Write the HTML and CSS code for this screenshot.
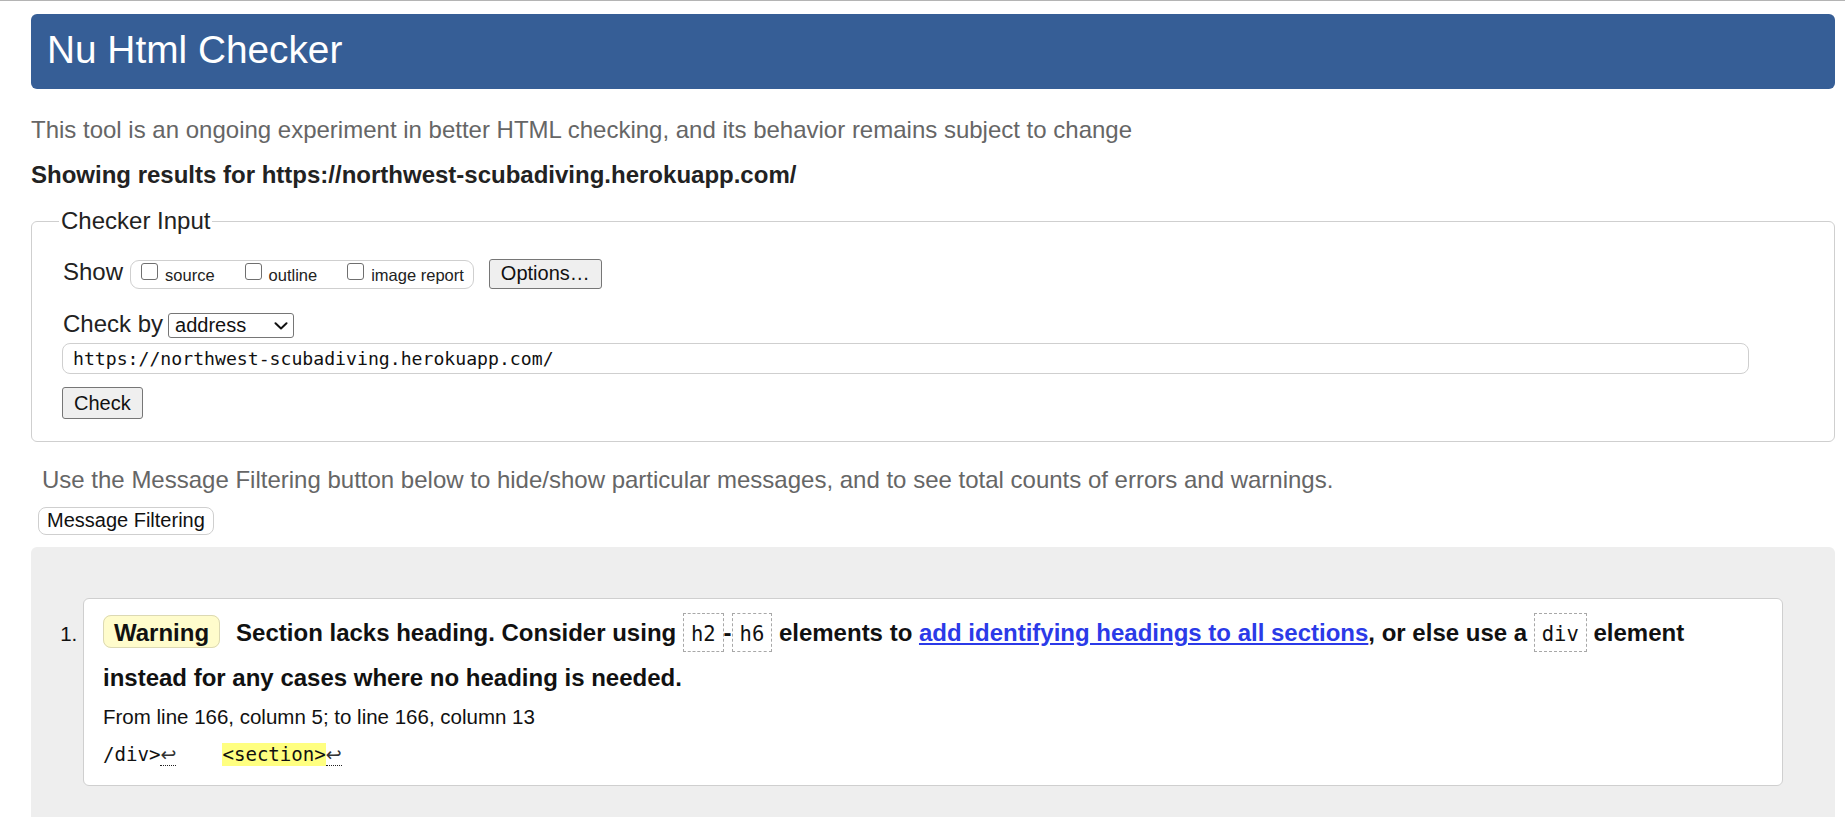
FILE: index.html
```
<!DOCTYPE html>
<html lang="en">
<head>
<meta charset="utf-8">
<title>Showing results for https://northwest-scubadiving.herokuapp.com/ - Nu Html Checker</title>
<link rel="stylesheet" href="styles.css">
</head>
<body>
<header class="banner"><h1 class="title">Nu Html Checker</h1></header>
<p class="intro">This tool is an ongoing experiment in better HTML checking, and its behavior remains subject to change</p>
<p class="showing">Showing results for https://northwest-scubadiving.herokuapp.com/</p>
<form class="checker">
  <fieldset class="fs">
    <legend class="legend">Checker Input</legend>
    <div class="row row-show">
      <span class="row-label">Show</span>
      <span class="opts">
        <label class="opt"><input type="checkbox" class="cb"><span class="opt-text">source</span></label>
        <label class="opt"><input type="checkbox" class="cb"><span class="opt-text">outline</span></label>
        <label class="opt"><input type="checkbox" class="cb"><span class="opt-text">image report</span></label>
      </span>
      <button type="button" class="btn btn-options">Options…</button>
    </div>
    <div class="row row-by">
      <label class="row-label">Check by</label>
      <span class="select-wrap">
        <select class="select"><option>address</option></select>
        <svg class="chev" width="14" height="8" viewBox="0 0 14 8"><path d="M1.5 1.2 L7 6.4 L12.5 1.2" fill="none" stroke="#111" stroke-width="2" stroke-linecap="round" stroke-linejoin="round"/></svg>
      </span>
    </div>
    <div class="row row-url"><input class="url" type="url" value="https://northwest-scubadiving.herokuapp.com/"></div>
    <div class="row row-check"><button type="button" class="btn btn-check">Check</button></div>
  </fieldset>
</form>
<p class="filter-note">Use the Message Filtering button below to hide/show particular messages, and to see total counts of errors and warnings.</p>
<button type="button" class="mf-btn">Message Filtering</button>
<section class="results">
  <ol class="messages">
    <li class="msg">
      <p class="msg-text"><strong class="badge">Warning</strong>Section lacks heading. Consider using <code class="tag">h2</code>-<code class="tag">h6</code> elements to <a class="msg-link" href="#">add identifying headings to all sections</a>, or else use a <code class="tag">div</code> element instead for any cases where no heading is needed.</p>
      <p class="location">From line 166, column 5; to line 166, column 13</p>
      <p class="extract"><code class="src">/div&gt;<span class="lf">↩</span>    <mark class="hl">&lt;section&gt;</mark><span class="lf">↩</span></code></p>
    </li>
  </ol>
</section>
</body>
</html>
```
FILE: styles.css
```
html {
  background: #fff;
}
body {
  margin: 0;
  border-top: 1px solid #b4b4b4;
  padding: 13px 10px 0 31px;
  font-family: "Liberation Sans", Arial, sans-serif;
  color: #111;
}

.banner {
  background: #365e96;
  border-radius: 6px;
  height: 75px;
}
.title {
  margin: 0;
  padding: 0 0 4px 16px;
  font-size: 38.8px;
  font-weight: normal;
  line-height: 71px;
  color: #fff;
}

.intro {
  margin: 27px 0 0;
  font-size: 24px;
  line-height: 28px;
  color: #666;
}
.showing {
  margin: 17px 0 0;
  font-size: 24px;
  line-height: 28px;
  font-weight: bold;
  color: #222;
}

.checker {
  margin: 18px 0 0;
}
.fs {
  margin: 0;
  border: 1px solid #cfcfcf;
  border-radius: 6px;
  padding: 24px 30px 22px 31px;
  min-width: 0;
}
.legend {
  margin-left: -4px;
  padding: 0 2px;
  font-size: 24px;
  line-height: 28px;
  color: #222;
}

.row {
  display: flex;
  align-items: flex-start;
}
.row-label {
  font-size: 24px;
  line-height: 28px;
  color: #222;
}
.row-show {
  height: 30px;
}
.row-show .row-label {
  margin-top: -1px;
}
.opts {
  display: flex;
  align-items: flex-start;
  box-sizing: border-box;
  height: 29px;
  margin: 1px 0 0 7px;
  padding: 0 9px 0 10px;
  border: 1px solid #cfcfcf;
  border-radius: 9px;
}
.opt {
  display: flex;
  align-items: flex-start;
  margin-right: 30px;
}
.opt:last-child {
  margin-right: 0;
}
.cb {
  appearance: none;
  -webkit-appearance: none;
  box-sizing: border-box;
  width: 17px;
  height: 17px;
  margin: 2px 7px 0 0;
  border: 1px solid #6f6f6f;
  border-radius: 3px;
  background: #fff;
}
.opt-text {
  margin-top: 5px;
  font-size: 16.5px;
  line-height: 18px;
  color: #222;
}

.btn {
  box-sizing: border-box;
  margin: 0;
  background: #efefef;
  border: 1px solid #767676;
  border-radius: 3px;
  font-family: "Liberation Sans", Arial, sans-serif;
  font-size: 20px;
  line-height: 23px;
  color: #111;
}
.btn-options {
  height: 30px;
  margin-left: 15px;
  padding: 2px 11px 3px;
}
.btn-check {
  height: 32px;
  margin-left: -1px;
  padding: 4px 11px 3px;
}

.row-by {
  height: 28px;
  margin-top: 21px;
}
.row-by .row-label {
  margin-top: 0;
}
.select-wrap {
  position: relative;
  margin: 3px 0 0 5px;
}
.select {
  appearance: none;
  -webkit-appearance: none;
  box-sizing: border-box;
  display: block;
  width: 126px;
  height: 25px;
  margin: 0;
  padding: 0 6px;
  border: 1px solid #767676;
  border-radius: 3px;
  background: #fff;
  font-family: "Liberation Sans", Arial, sans-serif;
  font-size: 20px;
  line-height: 23px;
  color: #111;
}
.chev {
  position: absolute;
  right: 6px;
  top: 9px;
  pointer-events: none;
}

.row-url {
  margin-top: 5px;
}
.url {
  box-sizing: border-box;
  width: 1687px;
  height: 31px;
  margin: 0 0 0 -1px;
  padding: 0 10px;
  border: 1px solid #cfcfcf;
  border-radius: 8px;
  background: #fff;
  font-family: "DejaVu Sans Mono", "Liberation Mono", monospace;
  font-size: 18.15px;
  color: #111;
}
.row-check {
  margin-top: 13px;
}

.filter-note {
  margin: 24px 0 0 11px;
  font-size: 24px;
  line-height: 28px;
  color: #666;
}
.mf-btn {
  display: block;
  box-sizing: border-box;
  height: 28px;
  margin: 13px 0 12px 7px;
  padding: 1px 8px 2px;
  background: #fff;
  border: 1px solid #cfcfcf;
  border-radius: 8px;
  font-family: "Liberation Sans", Arial, sans-serif;
  font-size: 20px;
  line-height: 23px;
  color: #111;
}

.results {
  background: #eee;
  border-radius: 6px 6px 0 0;
}
.messages {
  margin: 0;
  padding: 51px 52px 40px;
  list-style: decimal outside;
}
.msg {
  background: #fff;
  border: 1px solid #cfcfcf;
  border-radius: 6px;
  padding: 12px 19px 16px;
  font-size: 20.5px;
  color: #111;
}
.msg-text {
  margin: 0;
  font-size: 24px;
  font-weight: bold;
  line-height: 43.2px;
  color: #111;
}
.badge {
  margin-right: 16px;
  padding: 3px 10px 1px;
  background: #fffccc;
  border: 1px solid #dcd9b4;
  border-radius: 8px;
}
.tag {
  padding: 8px 7px 5px;
  border: 1px dashed #a8a8a8;
  font-family: "DejaVu Sans Mono", "Liberation Mono", monospace;
  font-size: 20.5px;
  font-weight: normal;
  color: #111;
}
.msg-link {
  color: #2b3ae8;
  text-decoration: underline;
}
.location {
  margin: 3.5px 0 0;
  font-size: 20.5px;
  line-height: 28px;
}
.extract {
  margin: 9px 0 0;
  line-height: 28px;
  white-space: pre;
}
.src {
  font-family: "DejaVu Sans Mono", "Liberation Mono", monospace;
  font-size: 19.1px;
  color: #111;
}
.lf {
  font-family: "DejaVu Sans", sans-serif;
  font-size: 19px;
  font-weight: normal;
  color: #333;
  border-bottom: 1px dotted #222;
}
.hl {
  background: #ffff80;
  color: #111;
}
```
